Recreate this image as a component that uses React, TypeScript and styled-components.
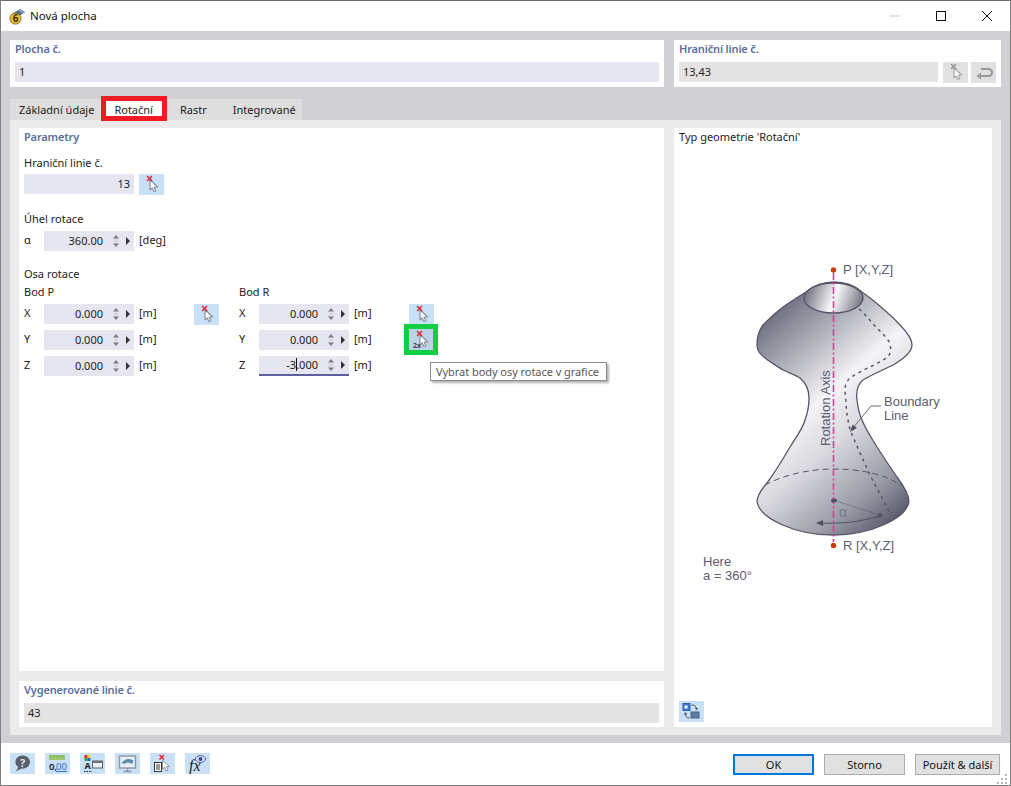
import React from 'react';
import styled, { createGlobalStyle } from 'styled-components';

const GlobalStyle = createGlobalStyle`
    html, body{
        margin: 0;
        padding: 0;
        background: #fff;
    }
    *{
        box-sizing: border-box;
    }
`;

const Dialog = styled.div`
    width: 1011px;
    height: 786px;
    display: flex;
    flex-direction: column;
    border: 1px solid #7f7f7f;
    border-top-color: #6e6e6e;
    background: #fff;
    color: #1c1c1c;
    font-family: "Noto Sans", sans-serif;
    font-size: 11px;
    line-height: 16px;
`;

const TitleBar = styled.div`
    height: 30px;
    flex: none;
    display: flex;
    align-items: center;
    padding-left: 8px;
    gap: 4px;
    font-size: 11.5px;
`;

const TitleText = styled.span`
    flex: 1;
    color: #111;
`;

const WindowControls = styled.div`
    display: flex;
    align-items: center;

    svg{
        display: block;
        width: 46px;
        height: 30px;
    }
`;

const Body = styled.div`
    flex: 1;
    min-height: 0;
    display: flex;
    flex-direction: column;
    padding: 9px 9px 8px 9px;
    background: #d0d0d5;
`;

const TopRow = styled.div`
    display: grid;
    grid-template-columns: 654px 327px;
    gap: 10px;
`;

const Panel = styled.div<{ $pb?: number }>`
    background: #fff;
    padding: 1px 5px ${p => p.$pb ?? 4}px 5px;
`;

const PanelTitle = styled.div`
    color: #5a6d9e;
    font-weight: 600;
    letter-spacing: -0.15px;
`;

const FieldRow = styled.div`
    display: flex;
    gap: 5px;
    margin-top: 5px;
    height: 21px;
`;

const Field = styled.div<{ $tone?: 'blue' | 'gray'; $grow?: boolean; $right?: boolean; $active?: boolean; $width?: number }>`
    height: 20px;
    display: flex;
    align-items: center;
    flex: ${p => (p.$grow ? 1 : 'none')};
    width: ${p => (p.$grow ? 'auto' : `${p.$width ?? 90}px`)};
    background: ${p => (p.$tone === 'gray' ? '#e4e4e4' : '#e6e6f0')};
    border-bottom: ${p => (p.$active ? '2px solid #5f5f9f' : 'none')};
    padding: ${p => (p.$right ? '0 0 0 4px' : '0 4px')};
    color: #222;
`;

const Value = styled.span<{ $right?: boolean }>`
    flex: 1;
    text-align: ${p => (p.$right ? 'right' : 'left')};
    padding-right: ${p => (p.$right ? '4px' : '0')};
`;

const Caret = styled.span`
    display: inline-block;
    width: 1px;
    height: 13px;
    margin: 0 -1px 0 0;
    vertical-align: -2px;
    background: #111;
`;

const IconButton = styled.button<{ $disabled?: boolean; $marked?: boolean }>`
    position: relative;
    width: 25px;
    height: 21px;
    flex: none;
    padding: 0;
    border: 0;
    display: block;
    background: ${p => (p.$disabled ? '#e1e1e1' : p.$marked ? '#bcd3e8' : '#c9e1f6')};

    svg{
        display: block;
    }

    ${p => p.$marked && `
        &::after{
            content: '';
            position: absolute;
            inset: -5px -4px -5px -5px;
            border: 5px solid #11cf42;
        }
    `}
`;

const ReturnButton = styled(IconButton)`
    margin-left: -2px;
`;

const Tooltip = styled.div`
    position: absolute;
    left: 21px;
    top: 33px;
    width: 177px;
    height: 19px;
    z-index: 3;
    padding: 0 0 0 5px;
    text-align: left;
    white-space: nowrap;
    font-family: "Noto Sans", sans-serif;
    font-size: 11px;
    line-height: 17px;
    letter-spacing: -0.05px;
    color: #575757;
    background: #fff;
    border: 1px solid #8c8c8c;
    box-shadow: 2px 2px 2px rgba(0, 0, 0, 0.3);
`;

const Tabs = styled.div`
    margin-top: 12px;
    display: flex;
    height: 21px;
    flex: none;
`;

const Tab = styled.div<{ $pl: number; $pr: number; $marked?: boolean }>`
    position: relative;
    height: 21px;
    padding: 0 ${p => p.$pr}px 0 ${p => p.$pl}px;
    line-height: 22px;
    white-space: nowrap;
    background: ${p => (p.$marked ? '#fff' : '#dedede')};

    ${p => p.$marked && `
        &::after{
            content: '';
            position: absolute;
            inset: -3px 0 -1px 0;
            border: 5px solid #ed1c24;
        }
    `}
`;

const TabBody = styled.div`
    flex: 1;
    min-height: 0;
    display: grid;
    grid-template-columns: 645px 318px;
    gap: 10px;
    padding: 8px 9px;
    background: #ebebeb;
`;

const LeftColumn = styled.div`
    display: flex;
    flex-direction: column;
    gap: 10px;
    min-height: 0;
`;

const ParamPanel = styled.div`
    flex: 1;
    background: #fff;
    padding: 1px 5px;
`;

const Caption = styled.div<{ $top: number; $bottom?: number }>`
    margin-top: ${p => p.$top}px;
    margin-bottom: ${p => p.$bottom ?? 4}px;
`;

const SingleRow = styled.div`
    display: flex;
    gap: 5px;
`;

const PointGrid = styled.div`
    display: grid;
    grid-template-columns: 195px 195px;
    column-gap: 20px;
`;

const PointRows = styled.div`
    display: grid;
    grid-template-columns: 20px 90px 60px 25px;
    grid-auto-rows: 20px;
    row-gap: 6px;
    align-items: start;
`;

const AxisLabel = styled.div`
    line-height: 18px;
`;

const Unit = styled.div`
    padding-left: 5px;
    line-height: 18px;
    white-space: nowrap;
`;

const LiftedButton = styled(IconButton)`
    margin-top: -1px;
`;

const GeometryPanel = styled.div`
    background: #fff;
    padding: 1px 5px 5px 5px;
    display: flex;
    flex-direction: column;
`;

const GeometryTitle = styled.div`
    color: #1c1c1c;
`;

const Figure = styled.svg`
    display: block;
    width: 318px;
    height: 340px;
    margin: 105px 0 0 -5px;
`;

const SwapButton = styled(IconButton)`
    margin-top: auto;
`;

const Footer = styled.div`
    height: 42px;
    flex: none;
    display: flex;
    align-items: flex-start;
    padding: 10px 10px 0 9px;
    position: relative;
`;

const ToolIcons = styled.div`
    flex: 1;
    display: flex;
    gap: 10px;
`;

const Actions = styled.div`
    display: flex;
    gap: 10px;
    margin-top: 1px;
`;

const ActionButton = styled.button<{ $primary?: boolean; $width: number }>`
    width: ${p => p.$width}px;
    height: 21px;
    padding: 0;
    background: #e1e1e1;
    border: ${p => (p.$primary ? '2px solid #0078d7' : '1px solid #adadad')};
    font-family: "Noto Sans", sans-serif;
    font-size: 11px;
    color: #111;
`;

const Grip = styled.svg`
    position: absolute;
    right: 1px;
    bottom: 1px;
`;

const CursorIcon: React.FC<{ off?: boolean; twice?: boolean }> = ({ off, twice }) => (
    <svg width="25" height="21" viewBox="0 0 25 21">
        <path d="M11 5.5 L11 15.8 L13.2 14 L15 17.5 L16.8 16.6 L15.2 13.2 L18.6 13 Z" fill="#fff" stroke={off ? '#a9a9a9' : '#8b929c'} strokeWidth="1.2" strokeLinejoin="round" />
        <path d="M8 2 L13 7 M13 2 L8 7" stroke={off ? '#8f8f8f' : '#e81e2c'} strokeWidth="1.4" />
        {twice && <text x="4" y="19" fontFamily="Noto Sans" fontSize="7" fontWeight="700" fill="#444">2x</text>}
    </svg>
);

const ReturnIcon: React.FC = () => (
    <svg width="25" height="21" viewBox="0 0 25 21">
        <path d="M7 14 H17 Q21 14 21 10.5 Q21 7 17 7 H10" fill="none" stroke="#9a9a9a" strokeWidth="2" />
        <path d="M10 10.5 L5.5 14 L10 17.5 Z" fill="#9a9a9a" />
    </svg>
);

const HelpIcon: React.FC = () => (
    <svg width="25" height="21" viewBox="0 0 25 21">
        <path d="M12.5 2.5 C8 2.5 5.5 5.5 5.5 9 C5.5 11.2 6.5 13 8.2 14 L6 18.5 L11.6 15.6 C16.5 16 20 13 20 9 C20 5.5 17 2.5 12.5 2.5 Z" fill="#5b6068" />
        <text x="12.7" y="13.5" textAnchor="middle" fontFamily="Noto Sans" fontSize="11" fontWeight="700" fill="#d6e6f4">?</text>
    </svg>
);

const DecimalsIcon: React.FC = () => (
    <svg width="25" height="21" viewBox="0 0 25 21">
        <rect x="4" y="2" width="16" height="5" fill="#9ec56b" />
        <path d="M6 2 V4 M9 2 V4 M12 2 V4 M15 2 V4 M18 2 V4" stroke="#6f9a44" strokeWidth="0.8" />
        <text x="4" y="17" fontFamily="Noto Sans" fontSize="9.5" fontWeight="600" fill="#222">0,</text>
        <text x="11" y="17" fontFamily="Noto Sans" fontSize="9.5" fill="#2f6fd0" textDecoration="underline">00</text>
    </svg>
);

const ColorsIcon: React.FC = () => (
    <svg width="25" height="21" viewBox="0 0 25 21">
        <rect x="4.5" y="2" width="3" height="3" fill="#e2262c" />
        <rect x="7.5" y="2" width="3" height="3" fill="#e8d52a" />
        <rect x="4.5" y="5" width="3" height="3" fill="#3b9f3a" />
        <rect x="7.5" y="5" width="3" height="3" fill="#2c62c8" />
        <text x="4.5" y="16" fontFamily="Noto Sans" fontSize="9" fontWeight="700" fill="#222">A</text>
        <path d="M4 18.5 H12" stroke="#222" strokeWidth="1.2" strokeDasharray="1.5 1" />
        <rect x="12.5" y="8" width="10" height="7" fill="#eef2f6" stroke="#5b6068" />
        <rect x="12.5" y="8" width="10" height="2" fill="#6a7480" />
    </svg>
);

const MonitorIcon: React.FC = () => (
    <svg width="25" height="21" viewBox="0 0 25 21">
        <rect x="4.5" y="3" width="16" height="12" fill="#e6eef5" stroke="#8d969f" strokeWidth="1.4" />
        <path d="M6.5 10 Q12 3.5 18.5 7.5 L17 11 Q13 8 9 11 Z" fill="#5b8db0" />
        <path d="M12.5 15 V18 M8.5 18.5 H16.5" stroke="#8d969f" strokeWidth="1.4" />
    </svg>
);

const DocPickIcon: React.FC = () => (
    <svg width="25" height="21" viewBox="0 0 25 21">
        <path d="M12.5 7.5 L12.5 16 L14.6 14.4 L16.2 18 L18 17.2 L16.5 13.8 L19.5 13.5 Z" fill="#fff" stroke="#8b929c" />
        <path d="M9.5 2 L14 6.5 M14 2 L9.5 6.5" stroke="#e81e2c" strokeWidth="1.4" />
        <rect x="4.5" y="9.5" width="7" height="9" fill="#fff" stroke="#333" />
        <path d="M6 12 H10 M6 14 H10 M6 16 H10" stroke="#333" />
    </svg>
);

const FormulaIcon: React.FC = () => (
    <svg width="25" height="21" viewBox="0 0 25 21">
        <text x="4" y="18" fontFamily="Liberation Serif" fontStyle="italic" fontSize="16" fill="#222">fx</text>
        <ellipse cx="15.5" cy="6" rx="5" ry="3.4" fill="#dbe6f2" stroke="#4b5aa0" />
        <circle cx="15.5" cy="6" r="2" fill="#3c4a94" />
    </svg>
);

const SwapIcon: React.FC = () => (
    <svg width="25" height="21" viewBox="0 0 25 21">
        <rect x="4" y="2.5" width="7" height="7" fill="#3f78d0" stroke="#2a5cae" />
        <rect x="5.5" y="4.5" width="3" height="3" fill="#fff" />
        <rect x="12" y="11" width="8" height="6" fill="#5f7fa8" stroke="#47648a" />
        <path d="M12.5 4 Q17 3.5 17.5 8" fill="none" stroke="#555" />
        <path d="M15.8 7 L17.5 9.5 L19.2 7 Z" fill="#555" />
        <path d="M10.5 17 Q6.5 17 6.5 12.5" fill="none" stroke="#555" />
        <path d="M4.8 13.5 L6.5 11 L8.2 13.5 Z" fill="#555" />
    </svg>
);

const AppIcon: React.FC = () => (
    <svg width="17" height="17" viewBox="0 0 17 17">
        <path d="M3 6 L11 1 L16 4 L9 9 Z" fill="#4f6f93" />
        <path d="M11 1 L16 4 L14 5.5 L9 2.3 Z" fill="#8aa2bb" />
        <circle cx="6.5" cy="10.5" r="5.6" fill="#e8c234" stroke="#6e5a12" strokeWidth="0.8" />
        <text x="6.5" y="14" textAnchor="middle" fontFamily="Noto Sans" fontSize="10" fontWeight="700" fill="#3d3208">6</text>
    </svg>
);

const SpinControl: React.FC = () => (
    <svg width="27" height="20" viewBox="0 0 27 20" style={{ flex: 'none', display: 'block' }}>
        <path d="M6 7.5 L9 4 L12 7.5 Z" fill="#7c7c7c" />
        <path d="M6 12.5 L9 16 L12 12.5 Z" fill="#7c7c7c" />
        <path d="M7 9.2 H11 M7 10.8 H11" stroke="#c9c9d4" strokeWidth="0.8" />
        <path d="M19 6 L23 10 L19 14 Z" fill="#333" />
    </svg>
);

const NumberField: React.FC<{ value: React.ReactNode; active?: boolean }> = ({ value, active }) => (
    <Field $right $active={active}>
        <Value $right>{value}</Value>
        <SpinControl />
    </Field>
);

const SurfaceFigure: React.FC = () => (
    <Figure viewBox="674 250 318 340">
        <defs>
            <linearGradient id="bodyShade" gradientUnits="userSpaceOnUse" x1="760" y1="320" x2="915" y2="500">
                <stop offset="0" stopColor="#6c6c7e" />
                <stop offset="0.42" stopColor="#f4f4f6" />
                <stop offset="0.6" stopColor="#d9d9df" />
                <stop offset="0.85" stopColor="#9a9aa6" />
                <stop offset="1" stopColor="#5f5f72" />
            </linearGradient>
            <linearGradient id="neckShade" gradientUnits="userSpaceOnUse" x1="806" y1="288" x2="862" y2="308">
                <stop offset="0" stopColor="#6c6c7c" />
                <stop offset="0.5" stopColor="#fafafa" />
                <stop offset="1" stopColor="#6c6c7c" />
            </linearGradient>
        </defs>
        <path
            d="M806 292 C815 285 825 282 834 282 C845 282 854 285 862 292 C872 299 890 314 900 325 C906 331 912 338 912 345 C912 352 905 358 893 365 C883 370 871 375 863 380 C858 384 856 392 857 400 C858 408 859 414 862 420 C866 430 871 437 877 447 C884 458 890 467 897 477 C903 485 909 494 909 502 C906 518 872 535 833 535 C794 535 760 518 757 502 C757 496 760 491 767 483 C775 472 783 459 790 447 C797 436 803 428 805 420 C808 412 809 405 809 398 C809 391 807 384 800 378 C794 374 789 373 783 370 C775 365 770 362 765 358 C760 354 757 351 757 345 C757 337 760 329 763 325 C770 318 775 313 783 307 C790 302 798 297 806 292 Z"
            fill="url(#bodyShade)"
            stroke="#56566a"
            strokeWidth="1.3"
        />
        <ellipse cx="833.5" cy="298" rx="29.5" ry="15" fill="url(#neckShade)" stroke="#56566a" strokeWidth="1.3" />
        <path d="M859 309 C866 315 871 322 877 328 C881 332 885 336 888 340 C891 344 892 352 888 357 C882 361 876 364 870 367 C863 370 856 374 850 378 C846 382 845 386 845 390 C845 395 846 399 846 403 C846 408 847 412 847 415 C848 420 849 425 850 430 L860 453 L870 475 L890 513" fill="none" stroke="#56566a" strokeWidth="1.5" strokeDasharray="3 4" />
        <path d="M765 485 C785 474 812 469 834 469 C860 469 885 474 902 486" fill="none" stroke="#56566a" strokeWidth="1" strokeDasharray="6 4" />
        <path d="M833.5 273 V542" stroke="#e03c9c" strokeWidth="1.6" strokeDasharray="7 2.5 2 2.5" />
        <circle cx="833.5" cy="270" r="2.7" fill="#cf3a12" />
        <circle cx="833.5" cy="545.5" r="2.7" fill="#cf3a12" />
        <ellipse cx="834" cy="500.5" rx="3" ry="2" fill="#505064" />
        <circle cx="880" cy="515.5" r="2.2" fill="#505064" />
        <path d="M836 501 L880 515" stroke="#505064" strokeWidth="0.9" strokeDasharray="1 1.2" />
        <path d="M880 516 C860 522 840 524 820 523" fill="none" stroke="#505064" strokeWidth="1" />
        <path d="M816 523 L823 520 L823 526 Z" fill="#505064" />
        <path d="M881 406 H871 L853 428" fill="none" stroke="#6b6b7c" strokeWidth="1" />
        <path d="M850 432 L852.5 424.5 L857 428 Z" fill="#505064" />
        <g fontFamily="Liberation Sans" fontSize="13" fill="#5d5d70">
            <text x="843" y="274">P [X,Y,Z]</text>
            <text x="843" y="550">R [X,Y,Z]</text>
            <text x="884" y="406">Boundary</text>
            <text x="884" y="420">Line</text>
            <text x="703" y="566">Here</text>
            <text x="703" y="580">a = 360°</text>
            <text transform="translate(830 446) rotate(-90)">Rotation Axis</text>
            <text x="839" y="517" fontSize="14" fill="#77778a">α</text>
        </g>
    </Figure>
);

const App: React.FC = () => {
    return (
        <>
            <GlobalStyle />
            <Dialog>
                <TitleBar>
                    <AppIcon />
                    <TitleText>Nová plocha</TitleText>
                    <WindowControls>
                        <svg viewBox="0 0 46 30"><path d="M18 15 H28" stroke="#c8c8c8" /></svg>
                        <svg viewBox="0 0 46 30"><rect x="18.5" y="10.5" width="9" height="9" fill="none" stroke="#111" /></svg>
                        <svg viewBox="0 0 46 30"><path d="M18 10 L28 20 M28 10 L18 20" stroke="#111" /></svg>
                    </WindowControls>
                </TitleBar>
                <Body>
                    <TopRow>
                        <Panel>
                            <PanelTitle>Plocha č.</PanelTitle>
                            <FieldRow>
                                <Field $grow><Value>1</Value></Field>
                            </FieldRow>
                        </Panel>
                        <Panel>
                            <PanelTitle>Hraniční linie č.</PanelTitle>
                            <FieldRow>
                                <Field $grow $tone="gray"><Value>13,43</Value></Field>
                                <IconButton $disabled><CursorIcon off /></IconButton>
                                <ReturnButton $disabled><ReturnIcon /></ReturnButton>
                            </FieldRow>
                        </Panel>
                    </TopRow>
                    <Tabs>
                        <Tab $pl={9} $pr={7}>Základní údaje</Tab>
                        <Tab $pl={13} $pr={14} $marked>Rotační</Tab>
                        <Tab $pl={13} $pr={13}>Rastr</Tab>
                        <Tab $pl={13} $pr={6}>Integrované</Tab>
                    </Tabs>
                    <TabBody>
                        <LeftColumn>
                            <ParamPanel>
                                <PanelTitle>Parametry</PanelTitle>
                                <Caption $top={10} $bottom={3}>Hraniční linie č.</Caption>
                                <SingleRow>
                                    <Field $right $width={110}><Value $right>13</Value></Field>
                                    <IconButton><CursorIcon /></IconButton>
                                </SingleRow>
                                <Caption $top={16}>Úhel rotace</Caption>
                                <PointRows>
                                    <AxisLabel>α</AxisLabel>
                                    <NumberField value="360.00" />
                                    <Unit>[deg]</Unit>
                                </PointRows>
                                <Caption $top={15}>Osa rotace</Caption>
                                <PointGrid>
                                    <div>
                                        <Caption $top={-2}>Bod P</Caption>
                                        <PointRows>
                                            <AxisLabel>X</AxisLabel>
                                            <NumberField value="0.000" />
                                            <Unit>[m]</Unit>
                                            <IconButton><CursorIcon /></IconButton>
                                            <AxisLabel>Y</AxisLabel>
                                            <NumberField value="0.000" />
                                            <Unit>[m]</Unit>
                                            <span />
                                            <AxisLabel>Z</AxisLabel>
                                            <NumberField value="0.000" />
                                            <Unit>[m]</Unit>
                                        </PointRows>
                                    </div>
                                    <div>
                                        <Caption $top={-2}>Bod R</Caption>
                                        <PointRows>
                                            <AxisLabel>X</AxisLabel>
                                            <NumberField value="0.000" />
                                            <Unit>[m]</Unit>
                                            <IconButton><CursorIcon /></IconButton>
                                            <AxisLabel>Y</AxisLabel>
                                            <NumberField value="0.000" />
                                            <Unit>[m]</Unit>
                                            <LiftedButton $marked>
                                                <CursorIcon twice />
                                                <Tooltip>Vybrat body osy rotace v grafice</Tooltip>
                                            </LiftedButton>
                                            <AxisLabel>Z</AxisLabel>
                                            <NumberField active value={<>-3<Caret />.000</>} />
                                            <Unit>[m]</Unit>
                                        </PointRows>
                                    </div>
                                </PointGrid>
                            </ParamPanel>
                            <Panel $pb={3}>
                                <PanelTitle>Vygenerované linie č.</PanelTitle>
                                <FieldRow>
                                    <Field $grow $tone="gray"><Value>43</Value></Field>
                                </FieldRow>
                            </Panel>
                        </LeftColumn>
                        <GeometryPanel>
                            <GeometryTitle>Typ geometrie 'Rotační'</GeometryTitle>
                            <SurfaceFigure />
                            <SwapButton><SwapIcon /></SwapButton>
                        </GeometryPanel>
                    </TabBody>
                </Body>
                <Footer>
                    <ToolIcons>
                        <IconButton><HelpIcon /></IconButton>
                        <IconButton><DecimalsIcon /></IconButton>
                        <IconButton><ColorsIcon /></IconButton>
                        <IconButton><MonitorIcon /></IconButton>
                        <IconButton><DocPickIcon /></IconButton>
                        <IconButton><FormulaIcon /></IconButton>
                    </ToolIcons>
                    <Actions>
                        <ActionButton $primary $width={81}>OK</ActionButton>
                        <ActionButton $width={81}>Storno</ActionButton>
                        <ActionButton $width={85}>Použít &amp; další</ActionButton>
                    </Actions>
                    <Grip width="12" height="12" viewBox="0 0 12 12">
                        <path d="M8 2 h2 v2 h-2 Z M4 6 h2 v2 h-2 Z M8 6 h2 v2 h-2 Z M0 10 h2 v2 h-2 Z M4 10 h2 v2 h-2 Z M8 10 h2 v2 h-2 Z" fill="#b5b5b5" />
                    </Grip>
                </Footer>
            </Dialog>
        </>
    );
};

export default App;
